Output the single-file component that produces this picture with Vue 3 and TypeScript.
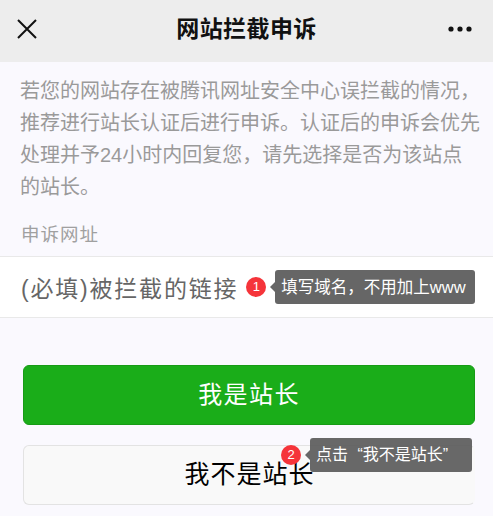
<script setup lang="ts">
// 网站拦截申诉页面
const intro =
  '若您的网站存在被腾讯网址安全中心误拦截的情况，推荐进行站长认证后进行申诉。认证后的申诉会优先处理并予24小时内回复您，请先选择是否为该站点的站长。'
</script>

<template>
  <div class="page">
    <header class="nav">
      <svg class="nav-close" width="20" height="20" viewBox="0 0 20 20">
        <path d="M1 1 L19 19 M19 1 L1 19" stroke="#111" stroke-width="2" fill="none" />
      </svg>
      <h1 class="nav-title">网站拦截申诉</h1>
      <svg class="nav-more" width="24" height="6" viewBox="0 0 24 6">
        <circle cx="3" cy="3" r="2.6" fill="#111" />
        <circle cx="12" cy="3" r="2.6" fill="#111" />
        <circle cx="21" cy="3" r="2.6" fill="#111" />
      </svg>
    </header>

    <p class="intro">{{ intro }}</p>
    <div class="label">申诉网址</div>

    <div class="field">
      <span class="placeholder">(必填)被拦截的链接</span>
      <span class="badge">1</span>
      <span class="tip tip-url">填写域名，不用加上www</span>
    </div>

    <div class="actions">
      <button class="btn btn-primary">我是站长</button>
      <div class="btn-wrap">
        <button class="btn btn-plain">我不是站长</button>
        <div class="hint">
          <span class="badge">2</span>
          <span class="tip tip-btn">点击 “我不是站长”</span>
        </div>
      </div>
    </div>
  </div>
</template>

<style>
html,
body {
  margin: 0;
  background: #faf9fe;
}
</style>

<style scoped>
.page {
  width: 493px;
  height: 516px;
  overflow: hidden;
  background: #faf9fe;
  font-family: "Liberation Sans", "Noto Sans CJK SC", sans-serif;
}

.nav {
  height: 62px;
  background: #ededed;
  display: flex;
  align-items: center;
  justify-content: space-between;
  padding: 0 21px 4px 17px;
  box-sizing: border-box;
}
.nav-title {
  margin: 0 0 4px 8px;
  font-size: 23px;
  font-weight: 700;
  letter-spacing: 0.4px;
  color: #111;
}

.intro {
  margin: 0;
  padding: 13px 12px 0 20px;
  font-size: 20px;
  line-height: 32px;
  color: #9a9a9a;
}

.label {
  padding: 17px 20px 0 21px;
  height: 36px;
  font-size: 18.5px;
  line-height: 30px;
  letter-spacing: 1px;
  color: #a0a0a0;
}

.field {
  height: 62px;
  box-sizing: border-box;
  background: #fff;
  border-top: 1px solid #e9e9e9;
  border-bottom: 1px solid #e9e9e9;
  display: flex;
  align-items: center;
  padding-left: 21px;
}
.placeholder {
  font-size: 23px;
  letter-spacing: 1.8px;
  color: #666;
}

.badge {
  flex: none;
  width: 20px;
  height: 20px;
  border-radius: 50%;
  background: #f5343a;
  color: #fff;
  font-size: 13px;
  line-height: 20px;
  text-align: center;
}
.field .badge {
  margin-left: 8px;
}

.tip {
  position: relative;
  box-sizing: border-box;
  height: 34px;
  line-height: 34px;
  background: #666;
  color: #fff;
  font-size: 16px;
  border-radius: 3px;
}
.tip::before {
  content: "";
  position: absolute;
  left: -5px;
  top: 12px;
  border-top: 5px solid transparent;
  border-bottom: 5px solid transparent;
  border-right: 5px solid #666;
}
.tip-url {
  margin-left: 9px;
  width: 200px;
  padding-left: 6px;
  font-size: 16.5px;
  white-space: nowrap;
}

.actions {
  padding: 47px 18px 0 23px;
  display: flex;
  flex-direction: column;
  gap: 20px;
}
.btn {
  display: block;
  width: 100%;
  height: 60px;
  box-sizing: border-box;
  border-radius: 6px;
  font-family: inherit;
  font-size: 24px;
  letter-spacing: 1.4px;
  padding: 0 0 5px;
}
.btn-primary {
  background: #1aad19;
  border: 1px solid #179b16;
  color: #fff;
}
.btn-plain {
  background: #f9f9f9;
  border: 1px solid #e3e3e3;
  border-right-color: transparent;
  color: #000;
  font-size: 25px;
  letter-spacing: 1px;
  padding: 0 0 7px 1px;
}

.btn-wrap {
  position: relative;
}
/* 提示浮层盖在按钮上方 */
.hint {
  position: absolute;
  left: 258px;
  top: -7px;
  display: flex;
  align-items: center;
}
.tip-btn {
  margin-left: 9px;
  width: 162px;
  padding-left: 6px;
  background: rgba(92, 92, 92, 0.93);
  word-spacing: 5px;
  white-space: nowrap;
}
.tip-btn::before {
  border-right-color: rgba(92, 92, 92, 0.93);
}
</style>
